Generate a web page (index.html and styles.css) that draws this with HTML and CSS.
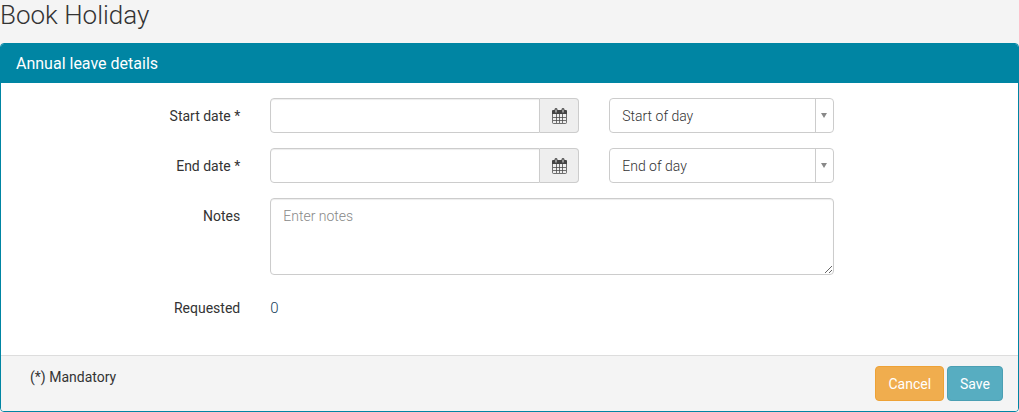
FILE: index.html
```html
<!DOCTYPE html>
<html lang="en">
<head>
<meta charset="utf-8">
<meta name="viewport" content="width=device-width, initial-scale=1">
<title>Book Holiday</title>
<link rel="stylesheet" href="styles.css">
</head>
<body>
<svg class="sprite" aria-hidden="true">
  <symbol id="calendar" viewBox="0 0 15 16">
    <path fill="none" stroke="currentColor" stroke-opacity=".75" d="M.5 3v11.5q0 1 1 1h12q1 0 1-1V3M4.5 6v9M7.5 6v9M10.5 6v9M1 9.500h13M1 12.500h13"/>
    <path fill="currentColor" fill-rule="evenodd" d="M1 2h1.500V1.500q0-1.500 1.500-1.500t1.500 1.500V2h4V1.500q0-1.500 1.500-1.500t1.500 1.500V2H14q1 0 1 1v3H0V3q0-1 1-1zM3.500 1.500v3h1v-3zM10.500 1.500v3h1v-3z"/>
  </symbol>
</svg>
<h1 class="page-title">Book Holiday</h1>
<form class="panel">
  <h2 class="panel-heading">Annual leave details</h2>
  <div class="panel-body">
    <div class="form-row">
      <label class="form-label" for="start-date">Start date *</label>
      <div class="input-group">
        <input class="control" id="start-date" type="text">
        <button class="addon" type="button" aria-label="Choose start date"><svg class="calendar"><use href="#calendar"/></svg></button>
      </div>
      <div class="select">
        <select class="control select-control" aria-label="Start time"><option>Start of day</option><option>Middle of day</option></select>
        <svg class="caret" viewBox="0 0 6 5" aria-hidden="true"><path d="M0 0h6L3 5z"/></svg>
      </div>
    </div>
    <div class="form-row">
      <label class="form-label" for="end-date">End date *</label>
      <div class="input-group">
        <input class="control" id="end-date" type="text">
        <button class="addon" type="button" aria-label="Choose end date"><svg class="calendar"><use href="#calendar"/></svg></button>
      </div>
      <div class="select">
        <select class="control select-control" aria-label="End time"><option>End of day</option><option>Middle of day</option></select>
        <svg class="caret" viewBox="0 0 6 5" aria-hidden="true"><path d="M0 0h6L3 5z"/></svg>
      </div>
    </div>
    <div class="form-row">
      <label class="form-label" for="notes">Notes</label>
      <div class="notes-cell"><textarea class="control notes" id="notes" placeholder="Enter notes"></textarea></div>
    </div>
    <div class="form-row">
      <label class="form-label" for="requested">Requested</label>
      <output class="requested" id="requested">0</output>
    </div>
  </div>
  <div class="panel-footer">
    <p class="mandatory">(*) Mandatory</p>
    <div class="actions">
      <button class="btn btn-cancel" type="button">Cancel</button>
      <button class="btn btn-save" type="submit">Save</button>
    </div>
  </div>
</form>
</body>
</html>
```

FILE: styles.css
```css
* { box-sizing: border-box; }

body {
  margin: 0;
  background: #f4f4f4;
  color: #333;
  font: 300 14px/20px Roboto, "Liberation Sans", sans-serif;
}

.sprite { display: none; }

.page-title {
  margin: 0 0 13px;
  font-size: 26px;
  font-weight: 300;
  line-height: 30px;
}

.panel {
  background: #fff;
  border: 1px solid #0085a3;
  border-radius: 4px;
  overflow: hidden;
}

.panel-heading {
  margin: 0;
  padding: 10px 15px 9px;
  background: #0085a3;
  color: #fff;
  font-size: 16px;
  font-weight: 400;
  line-height: 20px;
}

.panel-body {
  display: grid;
  gap: 15px;
  padding: 15px 0 30px;
}

.form-row {
  display: grid;
  grid-template-columns: 3fr 4fr 3fr 2fr;
}

.form-row > * {
  min-width: 0;
  margin: 0 15px;
}

.form-label {
  padding-top: 8px;
  font-weight: 400;
  text-align: right;
}

.control {
  width: 100%;
  min-width: 0;
  height: 35px;
  padding: 7px 12px 6px;
  border: 1px solid #ccc;
  border-radius: 4px;
  background: #fff;
  box-shadow: inset 0 1px 1px rgba(0, 0, 0, .075);
  color: #333;
  font: inherit;
}

.input-group { display: flex; }

.input-group .control {
  flex: 1;
  border-radius: 4px 0 0 4px;
}

.addon {
  display: grid;
  place-items: center;
  width: 39px;
  padding: 0;
  border: 1px solid #ccc;
  border-left: 0;
  border-radius: 0 4px 4px 0;
  background: #eee;
  color: #444;
}

.calendar {
  width: 15px;
  height: 16px;
}

.select {
  display: grid;
  grid-template-columns: 1fr 19px;
  align-items: center;
}

.select-control {
  grid-area: 1 / 1 / 2 / 3;
  appearance: none;
  background: linear-gradient(#ccc, #ccc) right 17px top / 1px 100% no-repeat #fff;
  box-shadow: none;
}

.caret {
  grid-area: 1 / 2;
  justify-self: center;
  width: 6px;
  height: 5px;
  fill: #888;
  pointer-events: none;
}

.notes-cell {
  grid-column: 2 / 4;
  display: flex;
}

.notes {
  height: 77px;
  resize: vertical;
}

.notes::placeholder { color: #888; }

.requested {
  padding: 8px 0 7px;
  color: #17415c;
  font-size: 15px;
}

.panel-footer {
  display: flex;
  justify-content: space-between;
  padding: 10px 15px;
  border-top: 1px solid #ddd;
  background: #f4f4f4;
}

.mandatory {
  margin: 1px 14px 0;
  font-weight: 400;
}

.actions {
  display: flex;
  gap: 3px;
}

.btn {
  height: 35px;
  padding: 1px 12px 0;
  border: 1px solid;
  border-radius: 4px;
  color: #fff;
  font: inherit;
  font-weight: 400;
}

.btn-cancel {
  background: #f0ad4e;
  border-color: #eea236;
}

.btn-save {
  background: #57adc1;
  border-color: #4b9fb3;
}
```
